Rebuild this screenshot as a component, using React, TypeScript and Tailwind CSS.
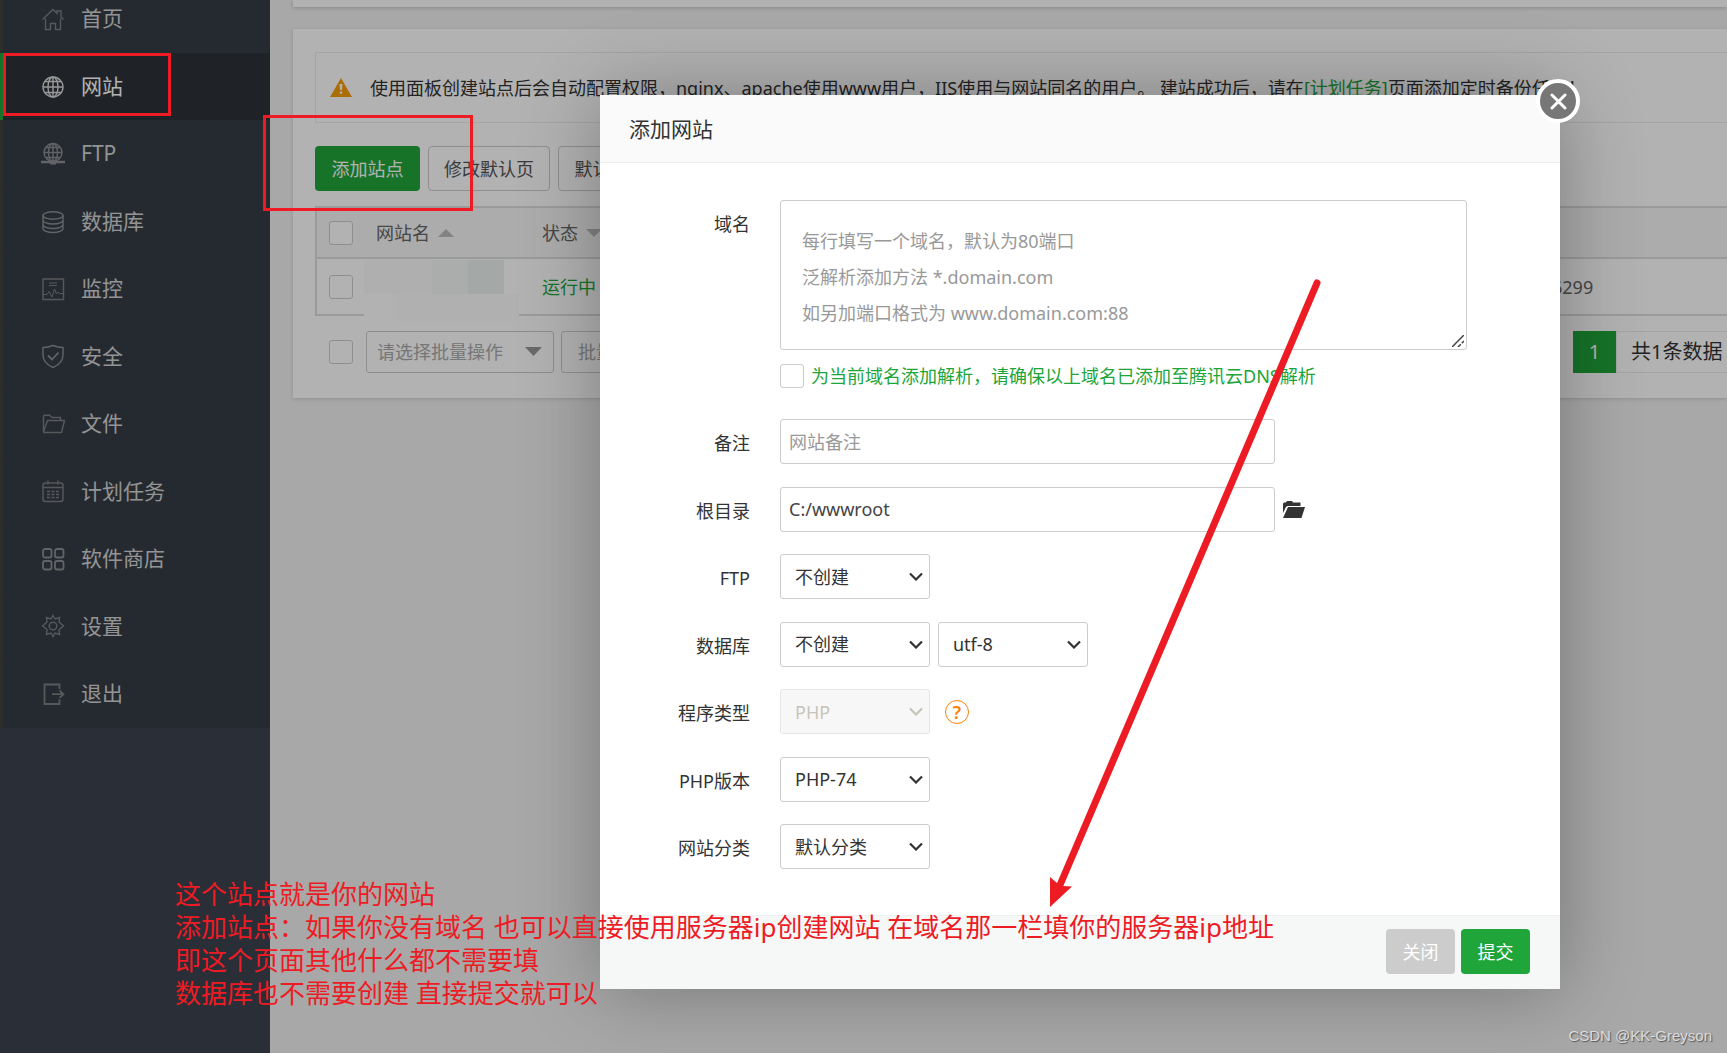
import { useState, type ReactNode } from 'react'

const iconProps = {
  width: 24,
  height: 24,
  viewBox: '0 0 24 24',
  fill: 'none',
  stroke: 'currentColor',
  strokeWidth: 1.4,
}

const globe = (
  <>
    <circle cx="12" cy="12" r="10" />
    <ellipse cx="12" cy="12" rx="5" ry="10" />
    <path d="M12 2v20M2 12h20M4 6.5h16M4 17.5h16" />
  </>
)

type MenuItem = {
  name: string
  icon: ReactNode
  dim?: boolean
}

const menu: MenuItem[] = [
  {
    name: '首页',
    icon: <path d="M1.5 12.5 12 2.500l4 3.800V4h4v6l2.500 2.500M4.500 11.500V22.500h5v-6h5v6h5V11.500" />,
    dim: true,
  },
  { name: '网站', icon: globe },
  {
    name: 'FTP',
    icon: (
      <>
        <circle cx="12" cy="10.500" r="9" />
        <ellipse cx="12" cy="10.500" rx="4.500" ry="9" />
        <path d="M12 1.500v18M3 10.500h18M5 5.500h14M5 15.500h14" />
        <path d="M0 20h24" strokeWidth="2.500" />
        <path d="M9 20.500h6" strokeWidth="4" />
      </>
    ),
  },
  {
    name: '数据库',
    icon: (
      <>
        <ellipse cx="12" cy="5.500" rx="10" ry="3.800" />
        <path d="M2 5.500v13c0 2.200 4.500 4 10 4s10-1.800 10-4v-13M2 10c0 2.200 4.500 4 10 4s10-1.800 10-4M2 14.500c0 2.200 4.500 4 10 4s10-1.800 10-4" />
      </>
    ),
  },
  {
    name: '监控',
    icon: (
      <>
        <path d="M2 2h20.500v20.500H2z" />
        <path d="M2 17.500h4l2-3 3 5.500 2.500-8 2 5 1.500-2 1.500 1.500h4M8 6h8M8 8.500h8" strokeWidth="1" />
      </>
    ),
    dim: true,
  },
  {
    name: '安全',
    icon: (
      <>
        <path d="M12 1.500c3 1.200 6.500 2 10 2V11c0 6-4 9.800-10 12.500C6 20.800 2 17 2 11V3.500c3.500 0 7-.8 10-2z" />
        <path d="m7 11.500 4 4 6.500-7" strokeWidth="1.800" />
      </>
    ),
  },
  {
    name: '文件',
    icon: <path d="M2.500 20V4.500c0-.8.5-1.200 1.200-1.200h5L11 5.500h8.500V8M2.500 20 6.500 8.500h17L20.500 20.500H3z" />,
    dim: true,
  },
  {
    name: '计划任务',
    icon: (
      <>
        <rect x="2" y="4" width="20" height="18.500" rx="2.500" />
        <path d="M2 8.500h20M7 1.500v4M17 1.500v4" />
        <path d="M6 12.500h12M6 15.500h12M6 18.500h12" strokeDasharray="3 1.500" />
      </>
    ),
    dim: true,
  },
  {
    name: '软件商店',
    icon: (
      <g strokeWidth="1.800">
        <rect x="2" y="2" width="8.500" height="8.500" rx="2" />
        <rect x="14" y="2" width="8.500" height="8.500" rx="2" />
        <rect x="2" y="14" width="8.500" height="8.500" rx="2" />
        <rect x="14" y="14" width="8.500" height="8.500" rx="2" />
      </g>
    ),
  },
  {
    name: '设置',
    icon: (
      <>
        <circle cx="12" cy="12" r="3.800" />
        <path d="M12 1.500 14 5l4.500-1.500-.5 4.500 4.500 4-4.500 3.500.5 5-4.500-1.500-2 3.500-2-3.500-4.500 1.500.5-5L1.500 12 6 8l-.5-4.500L10 5z" />
      </>
    ),
    dim: true,
  },
  {
    name: '退出',
    icon: <path d="M18.500 7V2.500h-15v19.500h15V17.500M11 12.200h11M18.500 8.500l4 3.700-4 3.700" strokeWidth="1.800" />,
    dim: true,
  },
]

const inputClass = 'h-[45px] rounded-[3px] border border-[#ccc] bg-white text-lg text-[#444] placeholder:text-[#999]'
const checkClass = 'block size-6 shrink-0 appearance-none rounded-[3px] border border-[#ccc] bg-white checked:bg-[#20a53a]'

type SelectProps = {
  id?: string
  label?: string
  options: string[]
  disabled?: boolean
}

function Select({ id, label, options, disabled }: SelectProps) {
  return (
    <div className="relative">
      <select
        id={id}
        aria-label={label}
        disabled={disabled}
        className="block h-[45px] w-[150px] appearance-none rounded-[3px] border border-[#ccc] bg-white pl-3.5 text-lg text-[#333] disabled:border-[#e6e6e6] disabled:bg-[#f7f7f7] disabled:text-[#c8c5b8] disabled:opacity-100"
      >
        {options.map(option => (
          <option key={option}>{option}</option>
        ))}
      </select>
      <svg
        width="14"
        height="9"
        viewBox="0 0 14 9"
        fill="none"
        stroke={disabled ? '#c8c5b8' : '#333'}
        strokeWidth="2.200"
        className="pointer-events-none absolute top-[18px] right-[7px]"
      >
        <path d="m1 1.500 6 6 6-6" />
      </svg>
    </div>
  )
}

function FormRow({ label, htmlFor, children }: { label: string; htmlFor: string; children: ReactNode }) {
  return (
    <div className="flex">
      <label htmlFor={htmlFor} className="mr-[30px] w-[150px] shrink-0 pt-2.5 text-right text-lg text-[#333]">
        {label}
      </label>
      <div className="flex items-center gap-2">{children}</div>
    </div>
  )
}

function Sidebar() {
  return (
    <aside className="w-[270px] shrink-0 overflow-hidden bg-[#3c424f]">
      {/* Scrolled a little, so the first entry is cut at the top */}
      <ul className="-mt-3.5 grid h-[742px] auto-rows-fr bg-[#363d46]">
        {menu.map(item => {
          const active = item.name === '网站'
          return (
            <li key={item.name} className="flex border-b border-[#373d47]">
              <a
                href="#"
                className={
                  active
                    ? 'flex flex-1 items-center border-l-[3px] border-[#20a53a] bg-[#2d3238] pl-[38px] text-[21px] text-white'
                    : 'flex flex-1 items-center border-l-[3px] border-[#42433a] pl-[38px] text-[21px] text-[#d4d4d4]'
                }
              >
                <svg {...iconProps} className={active ? 'text-[#dadada]' : item.dim ? 'text-[#7c7f82]' : 'text-[#8c8f92]'}>
                  {item.icon}
                </svg>
                <span className="ml-4">{item.name}</span>
              </a>
            </li>
          )
        })}
      </ul>
    </aside>
  )
}

function SiteTable() {
  return (
    <table className="mt-[15px] w-full border-2 border-r-0 border-[#ddd] text-left text-lg text-[#666]">
      <thead>
        <tr className="h-[51px] border-b-2 border-[#ddd] bg-[#f6f6f6]">
          <th className="w-[60px] pl-3">
            <input type="checkbox" aria-label="全选" className={checkClass} />
          </th>
          <th className="w-[166px] font-normal">
            <span className="flex items-center gap-2">
              网站名
              <svg width="16" height="8" viewBox="0 0 16 8" fill="#bbb"><path d="M8 0l8 8H0z" /></svg>
            </span>
          </th>
          <th className="font-normal">
            <span className="flex items-center gap-2">
              状态
              <svg width="16" height="8" viewBox="0 0 16 8" fill="#bbb"><path d="M0 0h16L8 8z" /></svg>
            </span>
          </th>
          <th className="w-[175px]"></th>
        </tr>
      </thead>
      <tbody>
        <tr className="h-[57px]">
          <td className="pl-3">
            <input type="checkbox" aria-label="选择站点" className={checkClass} />
          </td>
          <td className="relative">
            {/* Site name is blurred out */}
            <div className="absolute -left-3 top-px h-[61px] w-[155px] bg-white">
              <div className="flex h-[34px]">
                <div className="w-[68px] bg-[#fbfbfb]"></div>
                <div className="w-9 bg-[#f5f8f7]"></div>
                <div className="w-9 bg-[#ebf3ef]"></div>
              </div>
              <div className="ml-8 h-[27px] w-[123px] bg-[#fcfcfc]"></div>
            </div>
          </td>
          <td className="text-[#20a53a]">运行中</td>
          <td>6299</td>
        </tr>
      </tbody>
    </table>
  )
}

function SitePage() {
  return (
    <main className="min-w-0 flex-1 overflow-hidden bg-[#f1f1f1] pl-[23px]">
      <div className="h-[7px] bg-white shadow-[0_1px_4px_rgba(0,0,0,0.2)]"></div>

      <section className="mt-[22px] bg-white pt-[23px] pb-[25px] pl-[22px] shadow-[0_1px_4px_rgba(0,0,0,0.15)]">
        <div className="flex h-[71px] items-center border border-r-0 border-[#ececec] pl-3.5">
          <svg width="22" height="19" viewBox="0 0 22 19" className="shrink-0">
            <path d="M11 0l11 19H0z" fill="#f59c0a" />
            <path d="M9.500 6h3l-.6 6h-1.800zM9.800 13.500h2.400v2.300H9.800z" fill="#fff" />
          </svg>
          <p className="ml-[18px] text-lg whitespace-nowrap text-[#333]">
            使用面板创建站点后会自动配置权限，nginx、apache使用www用户，IIS使用与网站同名的用户。 建站成功后，请在
            <a href="#" className="text-[#20a53a]">[计划任务]</a>
            页面添加定时备份任务！
          </p>
        </div>

        <div className="mt-[23px] flex gap-2 text-lg whitespace-nowrap text-[#555]">
          <button className="h-[45px] w-[105px] rounded bg-[#20a53a] text-white">添加站点</button>
          <button className="h-[45px] w-[122px] rounded border border-[#ccc]">修改默认页</button>
          <button className="h-[45px] w-[105px] rounded border border-[#ccc]">默认站点</button>
        </div>

        <SiteTable />

        <div className="mt-[15px] flex items-center justify-between text-lg whitespace-nowrap text-[#aaa]">
          <div className="flex items-center pl-3.5">
            <input type="checkbox" aria-label="选择全部站点" className={checkClass} />
            <div className="relative ml-[13px]">
              <select
                aria-label="批量操作"
                className="block h-[42px] w-[188px] appearance-none rounded-[3px] border border-[#ccc] bg-white pl-2.5 text-lg text-[#aaa]"
              >
                <option>请选择批量操作</option>
              </select>
              <svg width="17" height="9" viewBox="0 0 17 9" fill="#999" className="pointer-events-none absolute top-4 right-3">
                <path d="M0 0h17L8.500 9z" />
              </svg>
            </div>
            <button className="ml-[7px] h-[42px] rounded-[3px] border border-[#ccc] px-4">批量操作</button>
          </div>
          <div className="flex h-[42px] w-[154px] shrink-0 text-xl text-[#333]">
            <span className="flex w-[43px] items-center justify-center bg-[#20a53a] text-white">1</span>
            <span className="flex flex-1 items-center border-y border-l border-[#ececec] pl-3.5">共1条数据</span>
          </div>
        </div>
      </section>
    </main>
  )
}

function AddSiteDialog() {
  const [domains, setDomains] = useState('')
  const [remark, setRemark] = useState('')
  const [path, setPath] = useState('C:/wwwroot')

  return (
    <div
      role="dialog"
      aria-label="添加网站"
      className="absolute top-[95px] left-[600px] w-[960px] bg-white shadow-[1px_1px_75px_rgba(0,0,0,0.3)]"
    >
      <button
        aria-label="关闭窗口"
        className="absolute -top-4 -right-5 flex size-11 items-center justify-center rounded-full border-4 border-white bg-[#777]"
      >
        <svg width="17" height="17" viewBox="0 0 17 17" stroke="#fff" strokeWidth="3" strokeLinecap="round">
          <path d="m2 2 13 13M15 2 2 15" />
        </svg>
      </button>

      <h2 className="flex h-[68px] items-center border-b border-[#eee] bg-[#fafafa] pt-0.5 pl-[29px] text-[21px] text-[#333]">添加网站</h2>

      <form>
        <div className="pt-[37px] pb-[46px]">
          <div className="flex">
            <label htmlFor="domains" className="mr-[30px] w-[150px] shrink-0 pt-2.5 text-right text-lg text-[#333]">域名</label>
            <div>
              <div className="relative">
                <textarea
                  id="domains"
                  value={domains}
                  onChange={e => setDomains(e.target.value)}
                  placeholder={'每行填写一个域名，默认为80端口\n泛解析添加方法 *.domain.com\n如另加端口格式为 www.domain.com:88'}
                  className="block h-[150px] w-[687px] resize-none overflow-hidden rounded-[3px] border border-[#ccc] px-[21px] pt-[22px] text-lg leading-9 text-[#333] placeholder:text-[#999]"
                />
                <svg width="12" height="12" viewBox="0 0 12 12" stroke="#444" strokeWidth="1.500" className="pointer-events-none absolute right-[3px] bottom-[3px]">
                  <path d="M0 12 12 0" />
                  <path d="m6 12 6-6" strokeDasharray="4 1.500" />
                </svg>
              </div>
              <div className="mt-3.5 flex items-center gap-[7px]">
                <input id="dns" type="checkbox" className={checkClass} />
                <label htmlFor="dns" className="text-lg leading-6 text-[#20a53a]">
                  为当前域名添加解析，请确保以上域名已添加至腾讯云DNS解析
                </label>
              </div>
            </div>
          </div>

          <div className="mt-[31px] flex h-[450px] flex-col justify-between">
            <FormRow label="备注" htmlFor="remark">
              <input
                id="remark"
                type="text"
                value={remark}
                onChange={e => setRemark(e.target.value)}
                placeholder="网站备注"
                className={`${inputClass} w-[495px] px-2`}
              />
            </FormRow>
            <FormRow label="根目录" htmlFor="path">
              <input
                id="path"
                type="text"
                value={path}
                onChange={e => setPath(e.target.value)}
                className={`${inputClass} w-[495px] px-2`}
              />
              <button type="button" aria-label="选择目录">
                <svg width="22" height="17" viewBox="0 0 22 17" fill="#333">
                  <path d="M0 12V2.500L1 1.500h2L4 0h5l1 1.500h7.500V5H4.500L3 6z" />
                  <path d="M5 6h17l-3.500 11H0z" />
                </svg>
              </button>
            </FormRow>
            <FormRow label="FTP" htmlFor="ftp">
              <Select id="ftp" options={['不创建', '创建']} />
            </FormRow>
            <FormRow label="数据库" htmlFor="database">
              <Select id="database" options={['不创建', 'MySQL', 'SQLServer']} />
              <Select label="编码" options={['utf-8', 'utf8mb4', 'gbk', 'big5']} />
            </FormRow>
            <FormRow label="程序类型" htmlFor="program">
              <Select id="program" options={['PHP']} disabled />
              <a
                href="#"
                className="ml-[7px] flex size-6 items-center justify-center rounded-full border border-[#ff8000] text-lg font-semibold text-[#ff8000]"
              >
                ?
              </a>
            </FormRow>
            <FormRow label="PHP版本" htmlFor="version">
              <Select id="version" options={['PHP-74', '纯静态']} />
            </FormRow>
            <FormRow label="网站分类" htmlFor="category">
              <Select id="category" options={['默认分类']} />
            </FormRow>
          </div>
        </div>

        <div className="flex h-[74px] items-start justify-end gap-1.5 border-t border-[#edf1f2] bg-[#f6f8f8] pt-[13px] pr-[30px] text-lg text-white">
          <button type="button" className="h-[45px] w-[69px] rounded bg-[#ccc]">关闭</button>
          <button type="button" className="h-[45px] w-[69px] rounded bg-[#20a53a]">提交</button>
        </div>
      </form>
    </div>
  )
}

// Hand-drawn marks that float over the whole screen
function Annotations() {
  return (
    <div className="pointer-events-none">
      <div className="absolute top-[53px] left-[3px] h-[63px] w-[168px] border-3 border-[#ed1c24]"></div>
      <div className="absolute top-[115px] left-[263px] h-[96px] w-[210px] border-3 border-[#ed1c24]"></div>
      <svg width="280" height="632" viewBox="0 0 280 632" className="absolute top-[277px] left-[1045px]">
        <path d="M272 6 15 608" stroke="#ed1c24" strokeWidth="7" strokeLinecap="round" />
        <path d="M5 630V600l7 6 6 3 9 .5z" fill="#ed1c24" />
      </svg>
      <p className="absolute top-[878px] left-[175px] text-[26px] leading-[33px] whitespace-pre text-[#ed1c24]">
        {'这个站点就是你的网站\n添加站点：如果你没有域名 也可以直接使用服务器ip创建网站 在域名那一栏填你的服务器ip地址\n即这个页面其他什么都不需要填\n数据库也不需要创建 直接提交就可以'}
      </p>
      <p className="absolute right-[15px] bottom-1.5 font-['Liberation_Sans',sans-serif] text-[15px] text-[#dcdcdc] [text-shadow:1px_1px_1px_#555]">CSDN @KK-Greyson</p>
    </div>
  )
}

export default function App() {
  return (
    <div className="relative flex min-h-screen overflow-hidden font-['Noto_Sans','Noto_Sans_CJK_SC',sans-serif]" lang="zh-CN">
      <Sidebar />
      <SitePage />
      <div className="absolute inset-0 bg-black/30"></div>
      <AddSiteDialog />
      <Annotations />
    </div>
  )
}
